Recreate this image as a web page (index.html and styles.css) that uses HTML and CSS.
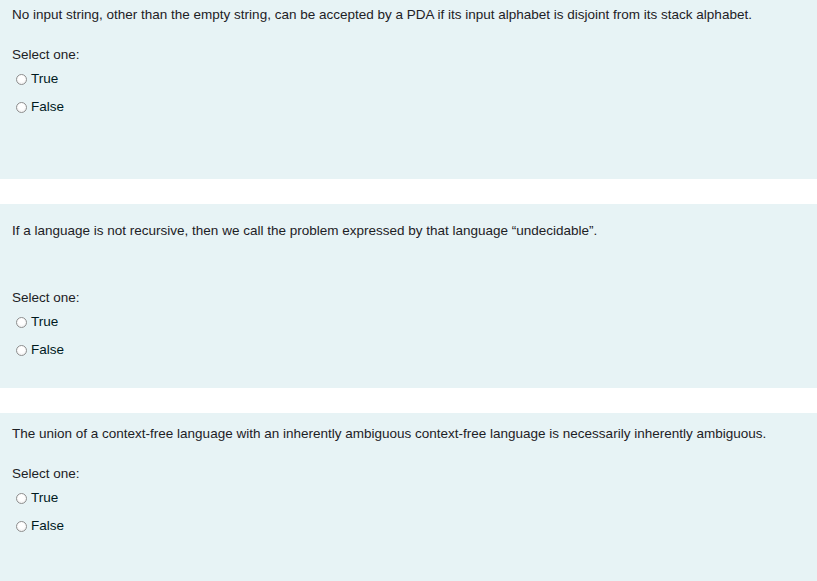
FILE: index.html
```html
<!DOCTYPE html>
<html>
<head>
<meta charset="utf-8">
<link rel="stylesheet" href="styles.css">
</head>
<body>
<div class="question q1">
  <div class="qtext">No input string, other than the empty string, can be accepted by a PDA if its input alphabet is disjoint from its stack alphabet.</div>
  <div class="prompt">Select one:</div>
  <div class="answer">
    <label class="option"><span class="radio"></span><span>True</span></label>
    <label class="option"><span class="radio"></span><span>False</span></label>
  </div>
</div>
<div class="question q2">
  <div class="qtext">If a language is not recursive, then we call the problem expressed by that language “undecidable”.</div>
  <div class="prompt">Select one:</div>
  <div class="answer">
    <label class="option"><span class="radio"></span><span>True</span></label>
    <label class="option"><span class="radio"></span><span>False</span></label>
  </div>
</div>
<div class="question q3">
  <div class="qtext">The union of a context-free language with an inherently ambiguous context-free language is necessarily inherently ambiguous.</div>
  <div class="prompt">Select one:</div>
  <div class="answer">
    <label class="option"><span class="radio"></span><span>True</span></label>
    <label class="option"><span class="radio"></span><span>False</span></label>
  </div>
</div>
</body>
</html>
```

FILE: styles.css
```css
html, body {
  margin: 0;
  padding: 0;
  background: #ffffff;
}
body {
  font-family: "Liberation Sans", Arial, sans-serif;
  font-size: 13.5px;
  line-height: 20px;
  color: #1d2125;
}
.question {
  background: #e7f3f5;
  padding: 0 12px;
  display: flex;
  flex-direction: column;
}
.question + .question {
  margin-top: 25px;
}
.q1 { padding-top: 5px; height: 174px; }
.q2 { padding-top: 17px; height: 167px; }
.q3 { padding-top: 11px; height: 157px; }
.q1 .prompt, .q3 .prompt { margin-top: 20px; }
.q2 .prompt { margin-top: 47px; }
.answer {
  display: flex;
  flex-direction: column;
  gap: 8px;
  margin-top: 4px;
  padding-left: 4px;
}
.option {
  display: flex;
  align-items: center;
  gap: 4px;
  color: #001a1e;
}
.radio {
  width: 9px;
  height: 9px;
  border: 1px solid #8f8f8f;
  border-radius: 50%;
  background: radial-gradient(circle at 50% 40%, #ffffff 40%, #e6e6e6 100%);
  flex: none;
}
```
